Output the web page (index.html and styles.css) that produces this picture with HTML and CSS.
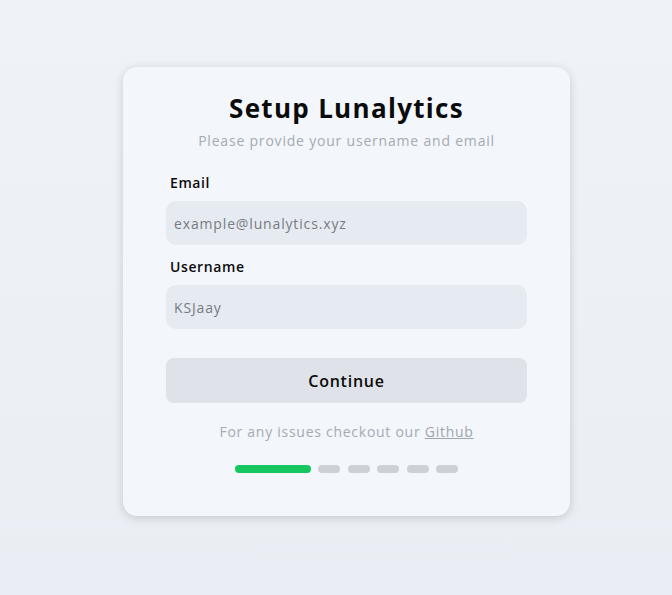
FILE: index.html
```html
<!DOCTYPE html>
<html lang="en">
<head>
<meta charset="utf-8">
<link rel="stylesheet" href="styles.css">
</head>
<body>
<main class="page">
  <section class="card">
    <h1 class="title">Setup Lunalytics</h1>
    <p class="subtitle">Please provide your username and email</p>
    <form class="form">
      <label class="field">
        <span class="label">Email</span>
        <input class="input" type="text" placeholder="example@lunalytics.xyz">
      </label>
      <label class="field">
        <span class="label">Username</span>
        <input class="input" type="text" placeholder="KSJaay">
      </label>
      <button class="button" type="button">Continue</button>
    </form>
    <p class="footer">For any issues checkout our <a class="link" href="#">Github</a></p>
    <div class="steps">
      <span class="step step-active"></span>
      <span class="step"></span>
      <span class="step"></span>
      <span class="step"></span>
      <span class="step"></span>
      <span class="step"></span>
    </div>
  </section>
</main>
</body>
</html>
```
FILE: styles.css
```css
* { box-sizing: border-box; }
html, body { margin: 0; height: 100%; }
body {
  font-family: "Open Sans", "Liberation Sans", sans-serif;
  background: linear-gradient(180deg, #eff2f7 0%, #eaedf3 100%);
  color: #0b0b0b;
  letter-spacing: 0.8px;
}
.page {
  padding: 67px 0 0 123px;
}
.card {
  width: 447px;
  height: 449px;
  background: #f3f6fb;
  border-radius: 14px;
  box-shadow: 0 2px 10px rgba(0,0,0,0.16);
  padding: 24px 43px 0;
  display: flex;
  flex-direction: column;
  align-items: stretch;
}
.title {
  margin: 0;
  text-align: center;
  font-size: 26px;
  font-weight: 700;
  line-height: 34px;
  letter-spacing: 1.3px;
}
.subtitle {
  margin: 5px 0 0;
  text-align: center;
  font-size: 14px;
  color: #a5aab3;
  line-height: 22px;
}
.form {
  display: flex;
  flex-direction: column;
  margin-top: 21px;
}
.field {
  display: flex;
  flex-direction: column;
  margin-bottom: 12px;
}
.label {
  font-size: 14px;
  font-weight: 600;
  padding-left: 4px;
  line-height: 20px;
  margin-bottom: 8px;
  letter-spacing: 0.6px;
}
.input {
  height: 44px;
  border: none;
  border-radius: 10px;
  background: #e6eaf1;
  font: inherit;
  font-size: 14px;
  letter-spacing: 0.85px;
  padding: 0 8px;
  color: #333;
}
.input::placeholder { color: #777b82; }
.button {
  margin-top: 17px;
  height: 45px;
  border: none;
  border-radius: 8px;
  background: #dfe2e8;
  font: inherit;
  font-size: 16px;
  font-weight: 600;
  letter-spacing: 0.75px;
  color: #0b0b0b;
}
.footer {
  margin: 19px 0 0;
  text-align: center;
  font-size: 14px;
  color: #a5aab3;
  line-height: 20px;
  letter-spacing: 0.73px;
}
.link { color: #a0a5ae; }
.steps {
  display: flex;
  justify-content: center;
  gap: 7.4px;
  margin-top: 23px;
}
.step {
  width: 22px;
  height: 8px;
  border-radius: 4px;
  background: #cdd0d6;
}
.step-active {
  width: 76px;
  background: #16c75f;
}
```
